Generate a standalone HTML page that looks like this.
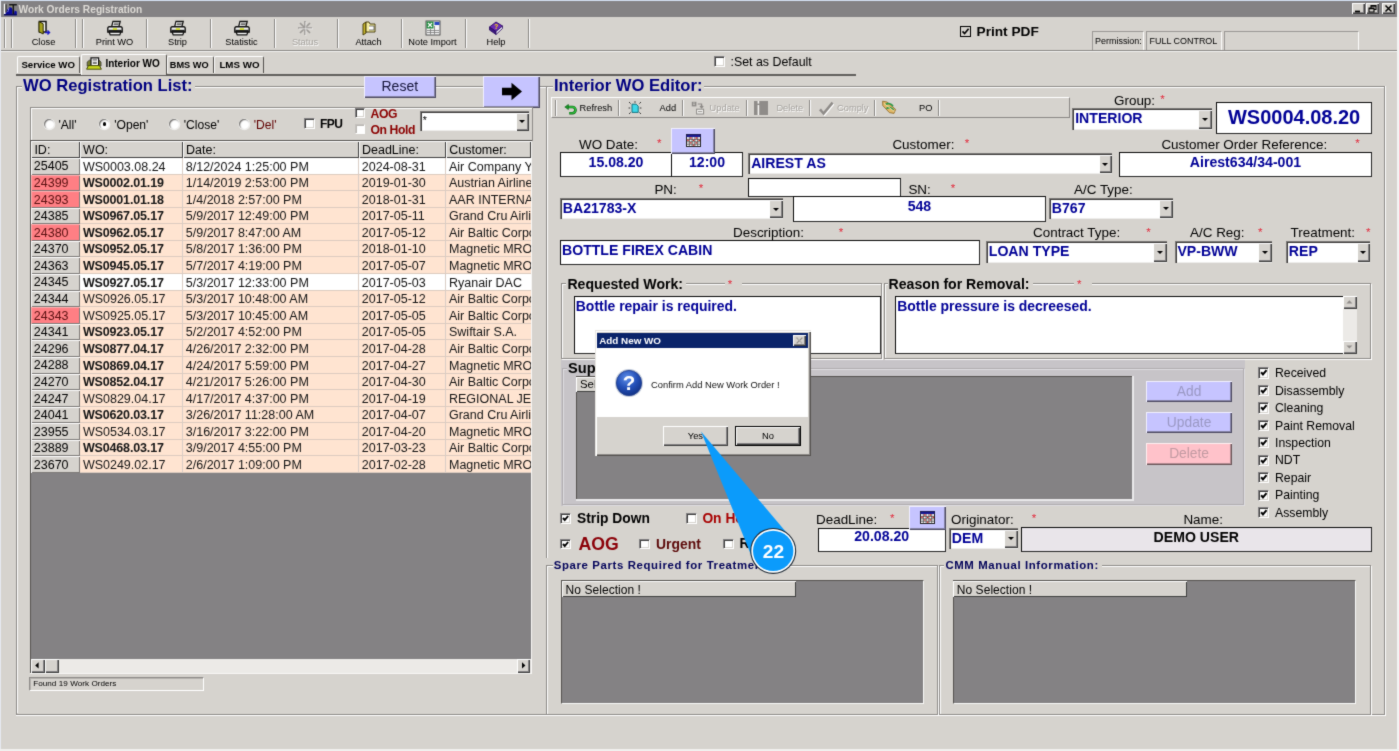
<!DOCTYPE html>
<html lang="en"><head><meta charset="utf-8"><title>Work Orders Registration</title>
<style>
html,body{margin:0;padding:0;}
body{width:1399px;height:751px;overflow:hidden;background:#d6d3ce;font-family:"Liberation Sans",sans-serif;color:#000;}
#app{position:relative;width:1399px;height:751px;overflow:hidden;background:#d6d3ce;will-change:transform;filter:url(#soft);}
#app div{position:absolute;box-sizing:border-box;}
.t{white-space:nowrap;}
.b{font-weight:bold;}
.tah{font-family:"Liberation Sans",sans-serif;}
.grp{border:1px solid #8e8b88;box-shadow:1px 1px 0 #fff, inset 1px 1px 0 #fff;}
.fld{background:#fff;border:1px solid #0a0a0a;border-right-color:#262626;border-bottom-color:#262626;white-space:nowrap;overflow:hidden;}
.cmb{background:#fff;border:1px solid #7b7977;border-right:0;border-bottom:0;box-shadow:inset 1px 1px 0 #3f3d3c, inset -1px -1px 0 #eeedeb;white-space:nowrap;overflow:hidden;}
.cmb .ct{position:absolute;left:1.8px;top:1px;}
.cmb .dd{position:absolute;right:0.4px;top:1px;bottom:0.8px;width:13.4px;background:#d6d3ce;box-shadow:inset 1px 1px 0 #fff, inset -1px -1px 0 #404040, inset -2px -2px 0 #848284;}
.cmb .dd i{position:absolute;left:3.1px;top:50%;margin-top:-1.6px;width:0;height:0;border-left:3.5px solid transparent;border-right:3.5px solid transparent;border-top:3.9px solid #000;}
.cb{background:#fff;border:1px solid #848284;border-right-color:#fff;border-bottom-color:#fff;box-shadow:inset 1px 1px 0 #404040, inset -1px -1px 0 #d6d3ce;}
.cb.fd{border-color:#c4c1bd #fff #fff #c4c1bd;box-shadow:inset 1px 1px 0 #b9b6b2;}
.cb svg{position:absolute;left:0;top:0;}
.rd{width:10px;height:10px;border-radius:50%;background:#fff;box-shadow:inset 1.1px 1.1px 1.2px #6e6c6a, 0.4px 0.4px 0 0.9px #efeeec;}
.rd i{position:absolute;left:3.2px;top:3.2px;width:3.6px;height:3.6px;border-radius:50%;background:#000;}
.btn{background:#d6d3ce;box-shadow:inset 1px 1px 0 #fff, inset -1px -1px 0 #404040, inset -2px -2px 0 #848284;text-align:center;white-space:nowrap;}
.lav{background:#c6c4ff;box-shadow:inset 1px 1px 0 #f0efff, inset -1px -1px 0 #4c4a62, inset -2px -2px 0 #8684a6;text-align:center;white-space:nowrap;}
.hd{background:#d6d3ce;box-shadow:inset 1px 1px 0 #fff, inset -1px -1px 0 #404040;white-space:nowrap;overflow:hidden;}
.sep{width:2px;border-left:1px solid #8a8785;border-right:1px solid #fff;}
.gc{white-space:nowrap;overflow:hidden;font-size:12.5px;line-height:16px;padding-left:2.2px;border-right:1px solid #d9cdc6;border-bottom:1px solid #dccbbf;color:#141414;}

</style></head>
<body>
<svg width="0" height="0" style="position:absolute" aria-hidden="true"><defs><filter id="soft" x="0" y="0" width="100%" height="100%" color-interpolation-filters="sRGB"><feConvolveMatrix order="3" kernelMatrix="0.5 2 0.5 2 14 2 0.5 2 0.5" divisor="24" edgeMode="duplicate" preserveAlpha="true"/></filter></defs></svg>
<div id="app">
<div style="left:0px;top:0px;width:1399px;height:1.2px;background:#d3dff0;"></div>
<div style="left:0px;top:0px;width:1px;height:751px;background:#e6e9f0;"></div>
<div style="left:1397px;top:0px;width:2px;height:751px;background:#f4f4f4;"></div>
<div style="left:0px;top:749px;width:1399px;height:2px;background:#f1f0ee;"></div>
<div style="left:1px;top:1px;width:1396px;height:16px;background:#848284;"></div>
<div style="left:3px;top:2px;width:15px;height:14px;"><svg width="15" height="14" viewBox="0 0 15 14"><path d="M1.6 2 V11.6 H5.4" stroke="#111" stroke-width="1.5" fill="none" transform="translate(1.1,0.2)"/><path d="M1.6 1.8 V11.4 H5.2" stroke="#fff" stroke-width="1.5" fill="none"/><rect x="7.8" y="3" width="1.7" height="8.6" fill="#9a9c78"/><path d="M3 11.2 L4.4 7.4 L6.4 5.2 L8.6 5.6 L9.6 8 V12 H11 L11.6 8.4 L13.8 9.6 V13.2 H1.2 L1.4 12.2 Z" fill="#0a0a9c"/><path d="M6.2 2.8 H13.8 M10.3 2.8 V12.4" stroke="#141414" stroke-width="1.5" fill="none"/><path d="M1 12.7 H13.8" stroke="#06065a" stroke-width="1.2"/><path d="M5 7.6 L6.2 6.6 M4.6 9.4 L5.6 8.8" stroke="#e8e8ff" stroke-width="0.9"/></svg></div>
<div class="t" style="left:18.5px;top:-0.3px;height:20px;line-height:20px;font-size:10.2px;font-weight:bold;color:#dedbd6;">Work Orders Registration</div>
<div class="btn" style="left:1352px;top:3px;width:13px;height:11px;"><svg width="13" height="11" viewBox="0 0 13 11" style="position:absolute;left:0;top:0"><path d="M3 8.5 H8" stroke="#000" stroke-width="1.8"/></svg></div>
<div class="btn" style="left:1366.4px;top:3px;width:13px;height:11px;"><svg width="13" height="11" viewBox="0 0 13 11" style="position:absolute;left:0;top:0"><path d="M5 2.5 H10 V6.5 H5 Z M5 3.2 H10" stroke="#000" stroke-width="1.1" fill="none"/><path d="M3 5 H8 V9 H3 Z M3 5.7 H8" stroke="#000" stroke-width="1.1" fill="#d6d3ce"/></svg></div>
<div class="btn" style="left:1382px;top:3px;width:13px;height:11px;"><svg width="13" height="11" viewBox="0 0 13 11" style="position:absolute;left:0;top:0"><path d="M3.5 2.5 L9.5 8.5 M9.5 2.5 L3.5 8.5" stroke="#000" stroke-width="1.5"/></svg></div>
<div style="left:1px;top:50px;width:1396px;height:1px;background:#8b8886;"></div>
<div style="left:1px;top:51px;width:1396px;height:1px;background:#f3f2f0;"></div>
<div class="sep" style="left:4px;top:19px;width:2px;height:29px;"></div>
<div class="sep" style="left:10.5px;top:19px;width:2px;height:29px;"></div>
<div class="sep" style="left:75px;top:19px;width:2px;height:29px;"></div>
<div class="sep" style="left:82px;top:19px;width:2px;height:29px;"></div>
<div class="sep" style="left:146px;top:19px;width:2px;height:29px;"></div>
<div class="sep" style="left:210px;top:19px;width:2px;height:29px;"></div>
<div class="sep" style="left:273.5px;top:19px;width:2px;height:29px;"></div>
<div class="sep" style="left:337px;top:19px;width:2px;height:29px;"></div>
<div class="sep" style="left:401px;top:19px;width:2px;height:29px;"></div>
<div class="sep" style="left:464.5px;top:19px;width:2px;height:29px;"></div>
<div class="sep" style="left:528px;top:19px;width:2px;height:29px;"></div>
<div style="left:35.5px;top:20.4px;width:16px;height:16px;"><svg width="16" height="16" viewBox="0 0 16 16"><path d="M3.4 1.6 H10 V12 H3.4 Z" fill="#fff" stroke="#111" stroke-width="1.5"/><path d="M3 1.6 L7.2 3.8 V14 L3 11.8 Z" fill="#a8a41c" stroke="#2a2800" stroke-width="1"/><path d="M9 12.5 H13 M11.5 10.5 L13.5 12.5 L11.5 14.5" stroke="#1a1ac8" stroke-width="1.4" fill="none"/></svg></div>
<div class="t" style="left:3.5px;width:80px;text-align:center;top:32.4px;height:20px;line-height:20px;font-size:9.25px;color:#000;">Close</div>
<div style="left:106.5px;top:20.4px;width:16px;height:16px;"><svg width="16" height="16" viewBox="0 0 16 16"><path d="M4.6 6.8 L6 1.4 H13.2 L11.8 6.8 Z" fill="#fff" stroke="#111" stroke-width="1.3"/><path d="M7 3.1 H11.9 M6.6 4.7 H11.5" stroke="#333" stroke-width="0.9"/><path d="M2.2 6.8 H13.8 A1.4 1.4 0 0 1 15.2 8.2 V12 H0.8 V8.2 A1.4 1.4 0 0 1 2.2 6.8 Z" fill="#f2f2f2" stroke="#111" stroke-width="1.4"/><rect x="1.4" y="9.8" width="13.2" height="2.4" fill="#1c1c1c"/><rect x="5.8" y="8.2" width="4.2" height="1.7" fill="#d4e020"/><path d="M2.2 12.2 L3.2 14.8 H12.8 L13.8 12.2 Z" fill="#fff" stroke="#111" stroke-width="1.2"/></svg></div>
<div class="t" style="left:74.5px;width:80px;text-align:center;top:32.4px;height:20px;line-height:20px;font-size:9.25px;color:#000;">Print WO</div>
<div style="left:169.5px;top:20.4px;width:16px;height:16px;"><svg width="16" height="16" viewBox="0 0 16 16"><path d="M4.6 6.8 L6 1.4 H13.2 L11.8 6.8 Z" fill="#fff" stroke="#111" stroke-width="1.3"/><path d="M7 3.1 H11.9 M6.6 4.7 H11.5" stroke="#333" stroke-width="0.9"/><path d="M2.2 6.8 H13.8 A1.4 1.4 0 0 1 15.2 8.2 V12 H0.8 V8.2 A1.4 1.4 0 0 1 2.2 6.8 Z" fill="#f2f2f2" stroke="#111" stroke-width="1.4"/><rect x="1.4" y="9.8" width="13.2" height="2.4" fill="#1c1c1c"/><rect x="5.8" y="8.2" width="4.2" height="1.7" fill="#d4e020"/><path d="M2.2 12.2 L3.2 14.8 H12.8 L13.8 12.2 Z" fill="#fff" stroke="#111" stroke-width="1.2"/></svg></div>
<div class="t" style="left:137.5px;width:80px;text-align:center;top:32.4px;height:20px;line-height:20px;font-size:9.25px;color:#000;">Strip</div>
<div style="left:233.5px;top:20.4px;width:16px;height:16px;"><svg width="16" height="16" viewBox="0 0 16 16"><path d="M4.6 6.8 L6 1.4 H13.2 L11.8 6.8 Z" fill="#fff" stroke="#111" stroke-width="1.3"/><path d="M7 3.1 H11.9 M6.6 4.7 H11.5" stroke="#333" stroke-width="0.9"/><path d="M2.2 6.8 H13.8 A1.4 1.4 0 0 1 15.2 8.2 V12 H0.8 V8.2 A1.4 1.4 0 0 1 2.2 6.8 Z" fill="#f2f2f2" stroke="#111" stroke-width="1.4"/><rect x="1.4" y="9.8" width="13.2" height="2.4" fill="#1c1c1c"/><rect x="5.8" y="8.2" width="4.2" height="1.7" fill="#d4e020"/><path d="M2.2 12.2 L3.2 14.8 H12.8 L13.8 12.2 Z" fill="#fff" stroke="#111" stroke-width="1.2"/></svg></div>
<div class="t" style="left:201.5px;width:80px;text-align:center;top:32.4px;height:20px;line-height:20px;font-size:9.25px;color:#000;">Statistic</div>
<div style="left:297px;top:20.4px;width:16px;height:16px;"><svg width="16" height="16" viewBox="0 0 16 16"><path d="M8 1 V15 M1 8 H15 M3 3 L13 13 M13 3 L3 13" stroke="#9c9996" stroke-width="1.7"/><path d="M8.8 1.8 V15.8 M1.8 8.8 H15.8" stroke="#fff" stroke-width="0.6"/></svg></div>
<div class="t" style="left:265px;width:80px;text-align:center;top:32.4px;height:20px;line-height:20px;font-size:9.25px;color:#a5a29e;text-shadow:0.7px 0.7px 0 #fff;">Status</div>
<div style="left:360.5px;top:20.4px;width:16px;height:16px;"><svg width="16" height="16" viewBox="0 0 16 16"><path d="M2 4 L5 2 V13 L2 15 Z" fill="#c8b830" stroke="#3a3000" stroke-width="0.9"/><path d="M5 2 H8 L9 4 H14 V12 H5 Z" fill="#f6eea0" stroke="#3a3000" stroke-width="0.9"/><path d="M8 6 H13 V10 H8" fill="#fff" stroke="#555" stroke-width="0.8"/></svg></div>
<div class="t" style="left:328.5px;width:80px;text-align:center;top:32.4px;height:20px;line-height:20px;font-size:9.25px;color:#000;">Attach</div>
<div style="left:424.5px;top:20.4px;width:16px;height:16px;"><svg width="16" height="16" viewBox="0 0 16 16"><rect x="1" y="1" width="14" height="14" fill="#f4f4f4" stroke="#444" stroke-width="0.9"/><rect x="1.5" y="1.5" width="7" height="7" fill="#1e8a3c"/><path d="M3 3 L7 7 M7 3 L3 7" stroke="#fff" stroke-width="1.2"/><rect x="9.5" y="2" width="5" height="3" fill="#2848c0"/><path d="M2 10.5 H14 M2 12.5 H14 M9.5 6 V14.5 M5.5 9 V14.5" stroke="#777" stroke-width="0.8"/></svg></div>
<div class="t" style="left:392.5px;width:80px;text-align:center;top:32.4px;height:20px;line-height:20px;font-size:9.25px;color:#000;">Note Import</div>
<div style="left:488px;top:20.4px;width:16px;height:16px;"><svg width="16" height="16" viewBox="0 0 16 16"><path d="M1.5 7 L8 2 L14.5 6 L8 11.5 Z" fill="#6a2ab8" stroke="#2a0a60" stroke-width="0.9"/><path d="M1.5 7 V10 L8 14.5 V11.5 Z" fill="#3a1880" stroke="#2a0a60" stroke-width="0.8"/><path d="M8 11.5 L14.5 6 V8.5 L8 14.5 Z" fill="#e8e8f4" stroke="#2a0a60" stroke-width="0.8"/><text x="6.2" y="9.2" font-family="Liberation Sans, sans-serif" font-size="6.5" font-weight="bold" fill="#ffe000">?</text></svg></div>
<div class="t" style="left:456px;width:80px;text-align:center;top:32.4px;height:20px;line-height:20px;font-size:9.25px;color:#000;">Help</div>
<div style="left:960px;top:26px;width:11px;height:11px;border:1.4px solid #000;"><svg width="9" height="9" viewBox="0 0 9 9" style="position:absolute;left:-0.2px;top:-0.3px"><path d="M1.5 4.4 L3.6 6.6 L7.6 1.8" stroke="#000" stroke-width="1.6" fill="none"/></svg></div>
<div class="t" style="left:976.5px;top:21.5px;height:20px;line-height:20px;font-size:13.7px;font-weight:bold;">Print PDF</div>
<div style="left:1091.5px;top:31px;width:52.5px;height:19px;border:1px solid #9a9794;border-right-color:#fbfbfa;border-bottom:none;"><span style="position:absolute;left:2.6px;top:0;line-height:18.4px;font-size:8.95px;white-space:nowrap">Permission:</span></div>
<div style="left:1146px;top:31px;width:75.5px;height:19px;border:1px solid #9a9794;border-right-color:#fbfbfa;border-bottom:none;"><span style="position:absolute;left:2.6px;top:0;line-height:18.4px;font-size:8.95px;white-space:nowrap">FULL CONTROL</span></div>
<div style="left:1223.5px;top:31px;width:135px;height:19px;border:1px solid #9a9794;border-right-color:#fbfbfa;border-bottom:none;"><span style="position:absolute;left:2.6px;top:0;line-height:18.4px;font-size:8.95px;white-space:nowrap"></span></div>
<div style="left:15.5px;top:74.4px;width:840px;height:1.4px;background:#605e5c;"></div>
<div style="left:17px;top:56px;width:63px;height:17.2px;border:1px solid #fff;border-right:1.5px solid #55524f;border-bottom:none;border-radius:2px 2px 0 0;background:#d6d3ce;"></div>
<div style="left:166.8px;top:56px;width:47.4px;height:17.2px;border:1px solid #fff;border-right:1.5px solid #55524f;border-bottom:none;border-radius:2px 2px 0 0;background:#d6d3ce;"></div>
<div style="left:214.4px;top:56px;width:49.6px;height:17.2px;border:1px solid #fff;border-right:1.5px solid #55524f;border-bottom:none;border-radius:2px 2px 0 0;background:#d6d3ce;"></div>
<div style="left:80.6px;top:53.8px;width:86.2px;height:20.8px;border:1px solid #fff;border-right:1.5px solid #55524f;border-bottom:none;border-radius:2px 2px 0 0;background:#d6d3ce;"></div>
<div class="t" style="left:21.4px;top:55.2px;height:20px;line-height:20px;font-size:9.65px;font-weight:bold;">Service WO</div>
<div class="t" style="left:105.4px;top:53.9px;height:20px;line-height:20px;font-size:10px;font-weight:bold;">Interior WO</div>
<div class="t" style="left:169.8px;top:55.2px;height:20px;line-height:20px;font-size:9.2px;font-weight:bold;">BMS WO</div>
<div class="t" style="left:219.4px;top:55.2px;height:20px;line-height:20px;font-size:9.75px;font-weight:bold;">LMS WO</div>
<div style="left:86px;top:56.4px;width:16px;height:13px;"><svg width="16" height="13" viewBox="0 0 16 13"><path d="M1.2 5 L3.4 3.2 H13 L15 5 V9 H1.2 Z" fill="#7a8030" stroke="#333" stroke-width="0.8"/><path d="M5 8.6 V0.8 H12.6 V8.6" fill="#fff" stroke="#111" stroke-width="1.2"/><path d="M6.6 2.4 H11 M6.6 3.8 H11" stroke="#8a8a8a" stroke-width="1"/><path d="M6.8 6 H10.8" stroke="#222" stroke-width="1.2"/><path d="M2.4 8.6 H13.4 L15.4 12.2 H0.6 Z" fill="#c6d61e" stroke="#3a3e00" stroke-width="0.9"/></svg></div>
<div class="cb" style="left:714px;top:56px;width:11px;height:11px;"></div>
<div class="t" style="left:730.5px;top:52px;height:20px;line-height:20px;font-size:12.4px;">:Set as Default</div>
<div style="left:15.6px;top:86px;width:1px;height:628.6px;background:#8e8b88;"></div>
<div style="left:16.6px;top:87px;width:1px;height:626.4px;background:#fff;"></div>
<div style="left:15.6px;top:86px;width:532px;height:1px;background:#8e8b88;"></div>
<div style="left:16.6px;top:87px;width:531px;height:1px;background:#fff;"></div>
<div style="left:15.6px;top:713.8px;width:1370px;height:1px;background:#8e8b88;"></div>
<div style="left:15.6px;top:714.8px;width:1370px;height:1px;background:#fff;"></div>
<div class="t" style="left:23px;top:80.8px;height:10px;line-height:10px;font-size:16.6px;font-weight:bold;color:#000080;background:#d6d3ce;padding:0 2px 0 1px;margin-left:-1px;">WO Registration List:</div>
<div class="lav" style="left:364px;top:76.2px;width:71.6px;height:21.4px;font-size:14px;line-height:21.6px;color:#15153a;">Reset</div>
<div class="lav" style="left:483px;top:76px;width:57.4px;height:31.6px;"><svg width="22" height="19" viewBox="0 0 22 18" preserveAspectRatio="none" style="position:absolute;left:18.2px;top:6px"><path d="M1 5.4 H10.5 V0.6 L21 9 L10.5 17.4 V12.6 H1 Z" fill="#000"/></svg></div>
<div style="left:29.6px;top:106.8px;width:503px;height:33.8px;border:1px solid #8e8b88;box-shadow:inset 1px 1px 0 #fff;border-right-color:#8e8b88;"></div>
<div class="rd" style="left:43.6px;top:119px;"></div>
<div class="t" style="left:58.4px;top:115px;height:20px;line-height:20px;font-size:12.1px;color:#000;">'All'</div>
<div class="rd" style="left:99.4px;top:119px;"><i></i></div>
<div class="t" style="left:114.2px;top:115px;height:20px;line-height:20px;font-size:12.1px;color:#000;">'Open'</div>
<div class="rd" style="left:169px;top:119px;"></div>
<div class="t" style="left:183.8px;top:115px;height:20px;line-height:20px;font-size:12.1px;color:#000;">'Close'</div>
<div class="rd" style="left:239px;top:119px;"></div>
<div class="t" style="left:253.8px;top:115px;height:20px;line-height:20px;font-size:12.1px;color:#600000;">'Del'</div>
<div class="cb" style="left:304px;top:118.2px;width:10.8px;height:10.8px;"></div>
<div class="t" style="left:320px;top:114px;height:20px;line-height:20px;font-size:12px;font-weight:bold;letter-spacing:-0.6px;">FPU</div>
<div class="cb" style="left:355px;top:107.8px;width:10.4px;height:10.4px;"></div>
<div class="t" style="left:370.4px;top:103.7px;height:20px;line-height:20px;font-size:12.2px;font-weight:bold;color:#8b0000;letter-spacing:-0.3px;">AOG</div>
<div class="cb fd" style="left:355px;top:124.1px;width:10.4px;height:10.4px;"></div>
<div class="t" style="left:370.4px;top:119.6px;height:20px;line-height:20px;font-size:12.2px;font-weight:bold;color:#8b0000;letter-spacing:-0.4px;">On Hold</div>
<div class="cmb" style="left:420px;top:111.4px;width:109.4px;height:20px;"><span class="ct" style="font-size:10.5px;font-weight:normal;color:#000;line-height:15.4px">*</span><span class="dd"><i></i></span></div>
<div style="left:31px;top:141px;width:499.6px;height:518px;background:#848284;"></div>
<div style="left:530.6px;top:140.4px;width:1.5px;height:534px;background:#f7f6f4;"></div>
<div style="left:30.2px;top:673px;width:502px;height:1.4px;background:#f7f6f4;"></div>
<div class="hd" style="left:31px;top:141.2px;width:48.7px;height:16.8px;"><span style="position:absolute;left:3.4px;top:0.4px;font-size:12.5px;line-height:16px">ID:</span></div>
<div class="hd" style="left:79.7px;top:141.2px;width:102.9px;height:16.8px;"><span style="position:absolute;left:3.4px;top:0.4px;font-size:12.5px;line-height:16px">WO:</span></div>
<div class="hd" style="left:182.6px;top:141.2px;width:176px;height:16.8px;"><span style="position:absolute;left:3.4px;top:0.4px;font-size:12.5px;line-height:16px">Date:</span></div>
<div class="hd" style="left:358.6px;top:141.2px;width:87.2px;height:16.8px;"><span style="position:absolute;left:3.4px;top:0.4px;font-size:12.5px;line-height:16px">DeadLine:</span></div>
<div class="hd" style="left:445.8px;top:141.2px;width:84.8px;height:16.8px;"><span style="position:absolute;left:3.4px;top:0.4px;font-size:12.5px;line-height:16px">Customer:</span></div>
<div style="left:31px;top:158px;width:48.7px;height:16.58px;background:#d6d3ce;box-shadow:inset 1px 1px 0 #fff, inset -1px -1px 0 #7d7a78;"><span style="position:absolute;left:2.8px;top:0.4px;font-size:12.5px;line-height:16px;color:#000;white-space:nowrap">25405</span></div>
<div class="gc" style="left:79.7px;top:158px;width:102.9px;height:16.58px;background:#fff;"><span style="position:relative;top:0.6px;left:1px">WS0003.08.24</span></div>
<div class="gc" style="left:182.6px;top:158px;width:176px;height:16.58px;background:#fff;"><span style="position:relative;top:0.6px;left:1px">8/12/2024 1:25:00 PM</span></div>
<div class="gc" style="left:358.6px;top:158px;width:87.2px;height:16.58px;background:#fff;"><span style="position:relative;top:0.6px;left:1px">2024-08-31</span></div>
<div class="gc" style="left:445.8px;top:158px;width:84.8px;height:16.58px;background:#fff;border-right:none;"><span style="position:relative;top:0.6px;left:1px">Air Company Y</span></div>
<div style="left:31px;top:174.58px;width:48.7px;height:16.58px;background:#ff7f84;box-shadow:inset 1px 1px 0 #ffb0b0, inset -1px -1px 0 #7d7a78;"><span style="position:absolute;left:2.8px;top:0.4px;font-size:12.5px;line-height:16px;color:#5a1010;white-space:nowrap">24399</span></div>
<div class="gc" style="left:79.7px;top:174.58px;width:102.9px;height:16.58px;background:#ffe4d1;font-weight:bold;letter-spacing:-0.15px;"><span style="position:relative;top:0.6px;left:1px">WS0002.01.19</span></div>
<div class="gc" style="left:182.6px;top:174.58px;width:176px;height:16.58px;background:#ffe4d1;"><span style="position:relative;top:0.6px;left:1px">1/14/2019 2:53:00 PM</span></div>
<div class="gc" style="left:358.6px;top:174.58px;width:87.2px;height:16.58px;background:#ffe4d1;"><span style="position:relative;top:0.6px;left:1px">2019-01-30</span></div>
<div class="gc" style="left:445.8px;top:174.58px;width:84.8px;height:16.58px;background:#ffe4d1;border-right:none;"><span style="position:relative;top:0.6px;left:1px">Austrian Airline</span></div>
<div style="left:31px;top:191.16px;width:48.7px;height:16.58px;background:#ff7f84;box-shadow:inset 1px 1px 0 #ffb0b0, inset -1px -1px 0 #7d7a78;"><span style="position:absolute;left:2.8px;top:0.4px;font-size:12.5px;line-height:16px;color:#5a1010;white-space:nowrap">24393</span></div>
<div class="gc" style="left:79.7px;top:191.16px;width:102.9px;height:16.58px;background:#ffe4d1;font-weight:bold;letter-spacing:-0.15px;"><span style="position:relative;top:0.6px;left:1px">WS0001.01.18</span></div>
<div class="gc" style="left:182.6px;top:191.16px;width:176px;height:16.58px;background:#ffe4d1;"><span style="position:relative;top:0.6px;left:1px">1/4/2018 2:57:00 PM</span></div>
<div class="gc" style="left:358.6px;top:191.16px;width:87.2px;height:16.58px;background:#ffe4d1;"><span style="position:relative;top:0.6px;left:1px">2018-01-31</span></div>
<div class="gc" style="left:445.8px;top:191.16px;width:84.8px;height:16.58px;background:#ffe4d1;border-right:none;"><span style="position:relative;top:0.6px;left:1px">AAR INTERNAT</span></div>
<div style="left:31px;top:207.74px;width:48.7px;height:16.58px;background:#d6d3ce;box-shadow:inset 1px 1px 0 #fff, inset -1px -1px 0 #7d7a78;"><span style="position:absolute;left:2.8px;top:0.4px;font-size:12.5px;line-height:16px;color:#000;white-space:nowrap">24385</span></div>
<div class="gc" style="left:79.7px;top:207.74px;width:102.9px;height:16.58px;background:#ffe4d1;font-weight:bold;letter-spacing:-0.15px;"><span style="position:relative;top:0.6px;left:1px">WS0967.05.17</span></div>
<div class="gc" style="left:182.6px;top:207.74px;width:176px;height:16.58px;background:#ffe4d1;"><span style="position:relative;top:0.6px;left:1px">5/9/2017 12:49:00 PM</span></div>
<div class="gc" style="left:358.6px;top:207.74px;width:87.2px;height:16.58px;background:#ffe4d1;"><span style="position:relative;top:0.6px;left:1px">2017-05-11</span></div>
<div class="gc" style="left:445.8px;top:207.74px;width:84.8px;height:16.58px;background:#ffe4d1;border-right:none;"><span style="position:relative;top:0.6px;left:1px">Grand Cru Airli</span></div>
<div style="left:31px;top:224.32px;width:48.7px;height:16.58px;background:#ff7f84;box-shadow:inset 1px 1px 0 #ffb0b0, inset -1px -1px 0 #7d7a78;"><span style="position:absolute;left:2.8px;top:0.4px;font-size:12.5px;line-height:16px;color:#5a1010;white-space:nowrap">24380</span></div>
<div class="gc" style="left:79.7px;top:224.32px;width:102.9px;height:16.58px;background:#ffe4d1;font-weight:bold;letter-spacing:-0.15px;"><span style="position:relative;top:0.6px;left:1px">WS0962.05.17</span></div>
<div class="gc" style="left:182.6px;top:224.32px;width:176px;height:16.58px;background:#ffe4d1;"><span style="position:relative;top:0.6px;left:1px">5/9/2017 8:47:00 AM</span></div>
<div class="gc" style="left:358.6px;top:224.32px;width:87.2px;height:16.58px;background:#ffe4d1;"><span style="position:relative;top:0.6px;left:1px">2017-05-12</span></div>
<div class="gc" style="left:445.8px;top:224.32px;width:84.8px;height:16.58px;background:#ffe4d1;border-right:none;"><span style="position:relative;top:0.6px;left:1px">Air Baltic Corpc</span></div>
<div style="left:31px;top:240.9px;width:48.7px;height:16.58px;background:#d6d3ce;box-shadow:inset 1px 1px 0 #fff, inset -1px -1px 0 #7d7a78;"><span style="position:absolute;left:2.8px;top:0.4px;font-size:12.5px;line-height:16px;color:#000;white-space:nowrap">24370</span></div>
<div class="gc" style="left:79.7px;top:240.9px;width:102.9px;height:16.58px;background:#ffe4d1;font-weight:bold;letter-spacing:-0.15px;"><span style="position:relative;top:0.6px;left:1px">WS0952.05.17</span></div>
<div class="gc" style="left:182.6px;top:240.9px;width:176px;height:16.58px;background:#ffe4d1;"><span style="position:relative;top:0.6px;left:1px">5/8/2017 1:36:00 PM</span></div>
<div class="gc" style="left:358.6px;top:240.9px;width:87.2px;height:16.58px;background:#ffe4d1;"><span style="position:relative;top:0.6px;left:1px">2018-01-10</span></div>
<div class="gc" style="left:445.8px;top:240.9px;width:84.8px;height:16.58px;background:#ffe4d1;border-right:none;"><span style="position:relative;top:0.6px;left:1px">Magnetic MRO</span></div>
<div style="left:31px;top:257.48px;width:48.7px;height:16.58px;background:#d6d3ce;box-shadow:inset 1px 1px 0 #fff, inset -1px -1px 0 #7d7a78;"><span style="position:absolute;left:2.8px;top:0.4px;font-size:12.5px;line-height:16px;color:#000;white-space:nowrap">24363</span></div>
<div class="gc" style="left:79.7px;top:257.48px;width:102.9px;height:16.58px;background:#ffe4d1;font-weight:bold;letter-spacing:-0.15px;"><span style="position:relative;top:0.6px;left:1px">WS0945.05.17</span></div>
<div class="gc" style="left:182.6px;top:257.48px;width:176px;height:16.58px;background:#ffe4d1;"><span style="position:relative;top:0.6px;left:1px">5/7/2017 4:19:00 PM</span></div>
<div class="gc" style="left:358.6px;top:257.48px;width:87.2px;height:16.58px;background:#ffe4d1;"><span style="position:relative;top:0.6px;left:1px">2017-05-07</span></div>
<div class="gc" style="left:445.8px;top:257.48px;width:84.8px;height:16.58px;background:#ffe4d1;border-right:none;"><span style="position:relative;top:0.6px;left:1px">Magnetic MRO</span></div>
<div style="left:31px;top:274.06px;width:48.7px;height:16.58px;background:#d6d3ce;box-shadow:inset 1px 1px 0 #fff, inset -1px -1px 0 #7d7a78;"><span style="position:absolute;left:2.8px;top:0.4px;font-size:12.5px;line-height:16px;color:#000;white-space:nowrap">24345</span></div>
<div class="gc" style="left:79.7px;top:274.06px;width:102.9px;height:16.58px;background:#fff;font-weight:bold;letter-spacing:-0.15px;"><span style="position:relative;top:0.6px;left:1px">WS0927.05.17</span></div>
<div class="gc" style="left:182.6px;top:274.06px;width:176px;height:16.58px;background:#fff;"><span style="position:relative;top:0.6px;left:1px">5/3/2017 12:33:00 PM</span></div>
<div class="gc" style="left:358.6px;top:274.06px;width:87.2px;height:16.58px;background:#fff;"><span style="position:relative;top:0.6px;left:1px">2017-05-03</span></div>
<div class="gc" style="left:445.8px;top:274.06px;width:84.8px;height:16.58px;background:#fff;border-right:none;"><span style="position:relative;top:0.6px;left:1px">Ryanair DAC</span></div>
<div style="left:31px;top:290.64px;width:48.7px;height:16.58px;background:#d6d3ce;box-shadow:inset 1px 1px 0 #fff, inset -1px -1px 0 #7d7a78;"><span style="position:absolute;left:2.8px;top:0.4px;font-size:12.5px;line-height:16px;color:#000;white-space:nowrap">24344</span></div>
<div class="gc" style="left:79.7px;top:290.64px;width:102.9px;height:16.58px;background:#ffe4d1;"><span style="position:relative;top:0.6px;left:1px">WS0926.05.17</span></div>
<div class="gc" style="left:182.6px;top:290.64px;width:176px;height:16.58px;background:#ffe4d1;"><span style="position:relative;top:0.6px;left:1px">5/3/2017 10:48:00 AM</span></div>
<div class="gc" style="left:358.6px;top:290.64px;width:87.2px;height:16.58px;background:#ffe4d1;"><span style="position:relative;top:0.6px;left:1px">2017-05-12</span></div>
<div class="gc" style="left:445.8px;top:290.64px;width:84.8px;height:16.58px;background:#ffe4d1;border-right:none;"><span style="position:relative;top:0.6px;left:1px">Air Baltic Corpc</span></div>
<div style="left:31px;top:307.22px;width:48.7px;height:16.58px;background:#ff7f84;box-shadow:inset 1px 1px 0 #ffb0b0, inset -1px -1px 0 #7d7a78;"><span style="position:absolute;left:2.8px;top:0.4px;font-size:12.5px;line-height:16px;color:#5a1010;white-space:nowrap">24343</span></div>
<div class="gc" style="left:79.7px;top:307.22px;width:102.9px;height:16.58px;background:#ffe4d1;"><span style="position:relative;top:0.6px;left:1px">WS0925.05.17</span></div>
<div class="gc" style="left:182.6px;top:307.22px;width:176px;height:16.58px;background:#ffe4d1;"><span style="position:relative;top:0.6px;left:1px">5/3/2017 10:45:00 AM</span></div>
<div class="gc" style="left:358.6px;top:307.22px;width:87.2px;height:16.58px;background:#ffe4d1;"><span style="position:relative;top:0.6px;left:1px">2017-05-05</span></div>
<div class="gc" style="left:445.8px;top:307.22px;width:84.8px;height:16.58px;background:#ffe4d1;border-right:none;"><span style="position:relative;top:0.6px;left:1px">Air Baltic Corpc</span></div>
<div style="left:31px;top:323.8px;width:48.7px;height:16.58px;background:#d6d3ce;box-shadow:inset 1px 1px 0 #fff, inset -1px -1px 0 #7d7a78;"><span style="position:absolute;left:2.8px;top:0.4px;font-size:12.5px;line-height:16px;color:#000;white-space:nowrap">24341</span></div>
<div class="gc" style="left:79.7px;top:323.8px;width:102.9px;height:16.58px;background:#ffe4d1;font-weight:bold;letter-spacing:-0.15px;"><span style="position:relative;top:0.6px;left:1px">WS0923.05.17</span></div>
<div class="gc" style="left:182.6px;top:323.8px;width:176px;height:16.58px;background:#ffe4d1;"><span style="position:relative;top:0.6px;left:1px">5/2/2017 4:52:00 PM</span></div>
<div class="gc" style="left:358.6px;top:323.8px;width:87.2px;height:16.58px;background:#ffe4d1;"><span style="position:relative;top:0.6px;left:1px">2017-05-05</span></div>
<div class="gc" style="left:445.8px;top:323.8px;width:84.8px;height:16.58px;background:#ffe4d1;border-right:none;"><span style="position:relative;top:0.6px;left:1px">Swiftair S.A.</span></div>
<div style="left:31px;top:340.38px;width:48.7px;height:16.58px;background:#d6d3ce;box-shadow:inset 1px 1px 0 #fff, inset -1px -1px 0 #7d7a78;"><span style="position:absolute;left:2.8px;top:0.4px;font-size:12.5px;line-height:16px;color:#000;white-space:nowrap">24296</span></div>
<div class="gc" style="left:79.7px;top:340.38px;width:102.9px;height:16.58px;background:#ffe4d1;font-weight:bold;letter-spacing:-0.15px;"><span style="position:relative;top:0.6px;left:1px">WS0877.04.17</span></div>
<div class="gc" style="left:182.6px;top:340.38px;width:176px;height:16.58px;background:#ffe4d1;"><span style="position:relative;top:0.6px;left:1px">4/26/2017 2:32:00 PM</span></div>
<div class="gc" style="left:358.6px;top:340.38px;width:87.2px;height:16.58px;background:#ffe4d1;"><span style="position:relative;top:0.6px;left:1px">2017-04-28</span></div>
<div class="gc" style="left:445.8px;top:340.38px;width:84.8px;height:16.58px;background:#ffe4d1;border-right:none;"><span style="position:relative;top:0.6px;left:1px">Air Baltic Corpc</span></div>
<div style="left:31px;top:356.96px;width:48.7px;height:16.58px;background:#d6d3ce;box-shadow:inset 1px 1px 0 #fff, inset -1px -1px 0 #7d7a78;"><span style="position:absolute;left:2.8px;top:0.4px;font-size:12.5px;line-height:16px;color:#000;white-space:nowrap">24288</span></div>
<div class="gc" style="left:79.7px;top:356.96px;width:102.9px;height:16.58px;background:#ffe4d1;font-weight:bold;letter-spacing:-0.15px;"><span style="position:relative;top:0.6px;left:1px">WS0869.04.17</span></div>
<div class="gc" style="left:182.6px;top:356.96px;width:176px;height:16.58px;background:#ffe4d1;"><span style="position:relative;top:0.6px;left:1px">4/24/2017 5:59:00 PM</span></div>
<div class="gc" style="left:358.6px;top:356.96px;width:87.2px;height:16.58px;background:#ffe4d1;"><span style="position:relative;top:0.6px;left:1px">2017-04-27</span></div>
<div class="gc" style="left:445.8px;top:356.96px;width:84.8px;height:16.58px;background:#ffe4d1;border-right:none;"><span style="position:relative;top:0.6px;left:1px">Magnetic MRO</span></div>
<div style="left:31px;top:373.54px;width:48.7px;height:16.58px;background:#d6d3ce;box-shadow:inset 1px 1px 0 #fff, inset -1px -1px 0 #7d7a78;"><span style="position:absolute;left:2.8px;top:0.4px;font-size:12.5px;line-height:16px;color:#000;white-space:nowrap">24270</span></div>
<div class="gc" style="left:79.7px;top:373.54px;width:102.9px;height:16.58px;background:#ffe4d1;font-weight:bold;letter-spacing:-0.15px;"><span style="position:relative;top:0.6px;left:1px">WS0852.04.17</span></div>
<div class="gc" style="left:182.6px;top:373.54px;width:176px;height:16.58px;background:#ffe4d1;"><span style="position:relative;top:0.6px;left:1px">4/21/2017 5:26:00 PM</span></div>
<div class="gc" style="left:358.6px;top:373.54px;width:87.2px;height:16.58px;background:#ffe4d1;"><span style="position:relative;top:0.6px;left:1px">2017-04-30</span></div>
<div class="gc" style="left:445.8px;top:373.54px;width:84.8px;height:16.58px;background:#ffe4d1;border-right:none;"><span style="position:relative;top:0.6px;left:1px">Air Baltic Corpc</span></div>
<div style="left:31px;top:390.12px;width:48.7px;height:16.58px;background:#d6d3ce;box-shadow:inset 1px 1px 0 #fff, inset -1px -1px 0 #7d7a78;"><span style="position:absolute;left:2.8px;top:0.4px;font-size:12.5px;line-height:16px;color:#000;white-space:nowrap">24247</span></div>
<div class="gc" style="left:79.7px;top:390.12px;width:102.9px;height:16.58px;background:#ffe4d1;"><span style="position:relative;top:0.6px;left:1px">WS0829.04.17</span></div>
<div class="gc" style="left:182.6px;top:390.12px;width:176px;height:16.58px;background:#ffe4d1;"><span style="position:relative;top:0.6px;left:1px">4/17/2017 4:37:00 PM</span></div>
<div class="gc" style="left:358.6px;top:390.12px;width:87.2px;height:16.58px;background:#ffe4d1;"><span style="position:relative;top:0.6px;left:1px">2017-04-19</span></div>
<div class="gc" style="left:445.8px;top:390.12px;width:84.8px;height:16.58px;background:#ffe4d1;border-right:none;"><span style="position:relative;top:0.6px;left:1px">REGIONAL JET</span></div>
<div style="left:31px;top:406.7px;width:48.7px;height:16.58px;background:#d6d3ce;box-shadow:inset 1px 1px 0 #fff, inset -1px -1px 0 #7d7a78;"><span style="position:absolute;left:2.8px;top:0.4px;font-size:12.5px;line-height:16px;color:#000;white-space:nowrap">24041</span></div>
<div class="gc" style="left:79.7px;top:406.7px;width:102.9px;height:16.58px;background:#ffe4d1;font-weight:bold;letter-spacing:-0.15px;"><span style="position:relative;top:0.6px;left:1px">WS0620.03.17</span></div>
<div class="gc" style="left:182.6px;top:406.7px;width:176px;height:16.58px;background:#ffe4d1;"><span style="position:relative;top:0.6px;left:1px">3/26/2017 11:28:00 AM</span></div>
<div class="gc" style="left:358.6px;top:406.7px;width:87.2px;height:16.58px;background:#ffe4d1;"><span style="position:relative;top:0.6px;left:1px">2017-04-07</span></div>
<div class="gc" style="left:445.8px;top:406.7px;width:84.8px;height:16.58px;background:#ffe4d1;border-right:none;"><span style="position:relative;top:0.6px;left:1px">Grand Cru Airli</span></div>
<div style="left:31px;top:423.28px;width:48.7px;height:16.58px;background:#d6d3ce;box-shadow:inset 1px 1px 0 #fff, inset -1px -1px 0 #7d7a78;"><span style="position:absolute;left:2.8px;top:0.4px;font-size:12.5px;line-height:16px;color:#000;white-space:nowrap">23955</span></div>
<div class="gc" style="left:79.7px;top:423.28px;width:102.9px;height:16.58px;background:#ffe4d1;"><span style="position:relative;top:0.6px;left:1px">WS0534.03.17</span></div>
<div class="gc" style="left:182.6px;top:423.28px;width:176px;height:16.58px;background:#ffe4d1;"><span style="position:relative;top:0.6px;left:1px">3/16/2017 3:22:00 PM</span></div>
<div class="gc" style="left:358.6px;top:423.28px;width:87.2px;height:16.58px;background:#ffe4d1;"><span style="position:relative;top:0.6px;left:1px">2017-04-20</span></div>
<div class="gc" style="left:445.8px;top:423.28px;width:84.8px;height:16.58px;background:#ffe4d1;border-right:none;"><span style="position:relative;top:0.6px;left:1px">Magnetic MRO</span></div>
<div style="left:31px;top:439.86px;width:48.7px;height:16.58px;background:#d6d3ce;box-shadow:inset 1px 1px 0 #fff, inset -1px -1px 0 #7d7a78;"><span style="position:absolute;left:2.8px;top:0.4px;font-size:12.5px;line-height:16px;color:#000;white-space:nowrap">23889</span></div>
<div class="gc" style="left:79.7px;top:439.86px;width:102.9px;height:16.58px;background:#ffe4d1;font-weight:bold;letter-spacing:-0.15px;"><span style="position:relative;top:0.6px;left:1px">WS0468.03.17</span></div>
<div class="gc" style="left:182.6px;top:439.86px;width:176px;height:16.58px;background:#ffe4d1;"><span style="position:relative;top:0.6px;left:1px">3/9/2017 4:55:00 PM</span></div>
<div class="gc" style="left:358.6px;top:439.86px;width:87.2px;height:16.58px;background:#ffe4d1;"><span style="position:relative;top:0.6px;left:1px">2017-03-23</span></div>
<div class="gc" style="left:445.8px;top:439.86px;width:84.8px;height:16.58px;background:#ffe4d1;border-right:none;"><span style="position:relative;top:0.6px;left:1px">Air Baltic Corpc</span></div>
<div style="left:31px;top:456.44px;width:48.7px;height:16.58px;background:#d6d3ce;box-shadow:inset 1px 1px 0 #fff, inset -1px -1px 0 #7d7a78;"><span style="position:absolute;left:2.8px;top:0.4px;font-size:12.5px;line-height:16px;color:#000;white-space:nowrap">23670</span></div>
<div class="gc" style="left:79.7px;top:456.44px;width:102.9px;height:16.58px;background:#ffe4d1;"><span style="position:relative;top:0.6px;left:1px">WS0249.02.17</span></div>
<div class="gc" style="left:182.6px;top:456.44px;width:176px;height:16.58px;background:#ffe4d1;"><span style="position:relative;top:0.6px;left:1px">2/6/2017 1:09:00 PM</span></div>
<div class="gc" style="left:358.6px;top:456.44px;width:87.2px;height:16.58px;background:#ffe4d1;"><span style="position:relative;top:0.6px;left:1px">2017-02-28</span></div>
<div class="gc" style="left:445.8px;top:456.44px;width:84.8px;height:16.58px;background:#ffe4d1;border-right:none;"><span style="position:relative;top:0.6px;left:1px">Magnetic MRO</span></div>
<div style="left:31px;top:659px;width:499.6px;height:14px;background:#eceae7;"></div>
<div class="btn" style="left:31.4px;top:659.4px;width:13.4px;height:13.4px;"><svg width="13" height="13" viewBox="0 0 13 13" style="position:absolute;left:0;top:0"><path d="M7.6 3.2 L4.2 6.4 L7.6 9.6 Z" fill="#000"/></svg></div>
<div class="btn" style="left:45px;top:659.4px;width:14px;height:13.4px;"></div>
<div class="btn" style="left:516.8px;top:659.4px;width:13.4px;height:13.4px;"><svg width="13" height="13" viewBox="0 0 13 13" style="position:absolute;left:0;top:0"><path d="M5 3.2 L8.4 6.4 L5 9.6 Z" fill="#000"/></svg></div>
<div style="left:30.2px;top:140.4px;width:1px;height:533px;background:#55524f;"></div>
<div style="left:30.2px;top:140.4px;width:502px;height:1px;background:#55524f;"></div>
<div style="left:29px;top:677px;width:175px;height:13.6px;border:1px solid #8e8b88;border-right-color:#fff;border-bottom-color:#fff;box-shadow:inset 1px 1px 0 #b5b2ae;"><span style="position:absolute;left:3.2px;top:0.2px;font-size:8.1px;line-height:11px;white-space:nowrap;word-spacing:0.3px">Found 19 Work Orders</span></div>
<div style="left:546.4px;top:86.4px;width:1px;height:471.4px;background:#8e8b88;"></div>
<div style="left:547.4px;top:87.4px;width:1px;height:470.4px;background:#fff;"></div>
<div style="left:546.6px;top:86.4px;width:838.4px;height:1px;background:#8e8b88;"></div>
<div style="left:547.6px;top:87.4px;width:836.4px;height:1px;background:#fff;"></div>
<div style="left:1384px;top:86.4px;width:1px;height:628.2px;background:#8e8b88;"></div>
<div style="left:1385px;top:86.4px;width:1px;height:629px;background:#fff;"></div>
<div class="t" style="left:554px;top:81.2px;height:10px;line-height:10px;font-size:16.6px;font-weight:bold;color:#000080;background:#d6d3ce;padding:0 2px 0 1px;margin-left:-1px;">Interior WO Editor:</div>
<div style="left:551px;top:97.4px;width:518.6px;height:20.4px;border:1px solid #fff;border-right-color:#8a8785;border-bottom-color:#8a8785;"></div>
<div class="sep" style="left:555px;top:100px;width:2px;height:15.6px;"></div>
<div class="sep" style="left:618.4px;top:100px;width:2px;height:15.6px;"></div>
<div class="sep" style="left:682.4px;top:100px;width:2px;height:15.6px;"></div>
<div class="sep" style="left:746px;top:100px;width:2px;height:15.6px;"></div>
<div class="sep" style="left:809px;top:100px;width:2px;height:15.6px;"></div>
<div class="sep" style="left:873.6px;top:100px;width:2px;height:15.6px;"></div>
<div class="sep" style="left:937.6px;top:100px;width:2px;height:15.6px;"></div>
<div style="left:564px;top:101.5px;width:13px;height:12px;"><svg width="13" height="12" viewBox="0 0 13 12"><path d="M3.2 3 H8.4 A3.1 3.1 0 0 1 8.4 9.2 H5.2" stroke="#0a5a12" stroke-width="2.6" fill="none"/><path d="M3.2 3 H8.4 A3.1 3.1 0 0 1 8.4 9.2 H5.2" stroke="#2fc23c" stroke-width="1.3" fill="none"/><path d="M4.4 0.4 L0.8 3 L4.4 5.6 Z" fill="#1a9a28" stroke="#0a5a12" stroke-width="0.6"/></svg></div>
<div class="t" style="left:579.6px;top:97.6px;height:20px;line-height:20px;font-size:9.3px;">Refresh</div>
<div style="left:628px;top:100.5px;width:14px;height:14px;"><svg width="14" height="14" viewBox="0 0 14 14"><path d="M4 3.2 H8.2 L10.2 5.2 V11.4 H4 Z" fill="#3fd8e8" stroke="#086a78" stroke-width="0.9"/><path d="M1 1 L2.6 2.6 M13 1 L11.4 2.6 M1 13 L2.6 11.4 M13 13 L11.4 11.4 M7 0.2 V1.8 M0.6 7 H2.2 M11.8 7 H13.4" stroke="#222" stroke-width="0.9"/></svg></div>
<div class="t" style="left:659.6px;top:97.6px;height:20px;line-height:20px;font-size:9.3px;">Add</div>
<div style="left:690.6px;top:100.8px;width:14px;height:14px;"><svg width="14" height="14" viewBox="0 0 14 14"><rect x="0.8" y="0.8" width="4.6" height="4.6" fill="#8d8a87"/><path d="M2 2 H4 M2 3.6 H4" stroke="#d6d3ce" stroke-width="0.7"/><path d="M6.8 3 H10.6 V6.4 M9 5 L10.6 6.8 L12.2 5" stroke="#8d8a87" stroke-width="1.2" fill="none"/><rect x="5.6" y="8.2" width="7" height="4.8" fill="#f4f3f1" stroke="#8d8a87" stroke-width="1"/><path d="M7 10.6 H11.2" stroke="#8d8a87" stroke-width="0.9"/></svg></div>
<div class="t" style="left:709.6px;top:97.6px;height:20px;line-height:20px;font-size:9.3px;color:#a5a29e;text-shadow:0.7px 0.7px 0 #fff;">Update</div>
<div style="left:754px;top:101px;width:14.4px;height:14px;"><svg width="14.4" height="14" viewBox="0 0 14.4 14"><rect x="0" y="0" width="14.4" height="14" fill="#8f8c89"/><rect x="3.6" y="0" width="1.6" height="2.6" fill="#f6f5f3"/><rect x="3.6" y="4" width="1.6" height="10" fill="#f6f5f3"/></svg></div>
<div class="t" style="left:776.4px;top:97.6px;height:20px;line-height:20px;font-size:9.3px;color:#a5a29e;text-shadow:0.7px 0.7px 0 #fff;">Delete</div>
<div style="left:819px;top:100.5px;width:15px;height:15px;"><svg width="15" height="15" viewBox="0 0 15 15"><path d="M1 8.4 L4.6 12.6 L13.6 1.6" stroke="#fff" stroke-width="2.6" fill="none" transform="translate(0.9,0.9)"/><path d="M1 8.4 L4.6 12.6 L13.6 1.6" stroke="#8f8c89" stroke-width="2.6" fill="none"/></svg></div>
<div class="t" style="left:837px;top:97.6px;height:20px;line-height:20px;font-size:9.3px;color:#a5a29e;text-shadow:0.7px 0.7px 0 #fff;">Comply</div>
<div style="left:881.6px;top:100.4px;width:15px;height:15px;"><svg width="15" height="15" viewBox="0 0 15 15"><path d="M0.6 1.2 L5 2 L13.6 9.4 L12 13.4 L7.4 12.6 L0.8 5.6 Z" fill="#e2b868" stroke="#8a6420" stroke-width="0.8"/><path d="M3.4 4.6 C6 2.6 9.6 3.8 11 6.4 M4.4 8.6 C7 6.6 10 7.8 11.6 10" stroke="#2f9a48" stroke-width="1.7" fill="none"/><path d="M2 3.4 L12.4 11.6" stroke="#f6deae" stroke-width="0.9"/></svg></div>
<div class="t" style="left:919px;top:97.6px;height:20px;line-height:20px;font-size:9.3px;">PO</div>
<div class="t" style="left:1114px;top:90.8px;height:20px;line-height:20px;font-size:13.45px;">Group:</div>
<div class="t" style="left:1160.3px;top:89.4px;height:20px;line-height:20px;font-size:11.6px;color:#e2283a;">*</div>
<div class="cmb" style="left:1072.4px;top:108px;width:139.8px;height:21.6px;"><span class="ct" style="font-size:14.1px;font-weight:bold;color:#000096;line-height:17px">INTERIOR</span><span class="dd"><i></i></span></div>
<div class="fld" style="left:1216px;top:102px;width:156.2px;height:31.8px;text-align:center;font-size:20px;font-weight:bold;color:#000096;line-height:29px;">WS0004.08.20</div>
<div class="t" style="left:579px;top:135px;height:20px;line-height:20px;font-size:13.45px;">WO Date:</div>
<div class="t" style="left:657.1px;top:133.4px;height:20px;line-height:20px;font-size:11.6px;color:#e2283a;">*</div>
<div class="fld" style="left:560px;top:152px;width:112px;height:24.8px;text-align:center;font-size:14.1px;font-weight:bold;color:#000096;line-height:18.6px;">15.08.20</div>
<div class="fld" style="left:671.4px;top:152px;width:71.2px;height:24.8px;text-align:center;font-size:14.1px;font-weight:bold;color:#000096;line-height:18.6px;">12:00</div>
<div class="lav" style="left:671px;top:128.4px;width:43.6px;height:25.6px;"></div>
<div style="left:685.6px;top:133px;width:15px;height:13px;"><svg width="15" height="13" viewBox="0 0 15 13"><rect x="0.5" y="0.5" width="14" height="12" fill="#fff" stroke="#222" stroke-width="1"/><rect x="0.5" y="0.5" width="14" height="2.6" fill="#1a1a90"/><path d="M0.5 5.4 H14.5 M0.5 7.8 H14.5 M0.5 10.2 H14.5 M3.3 3 V12.5 M6.1 3 V12.5 M8.9 3 V12.5 M11.7 3 V12.5" stroke="#333" stroke-width="0.7"/><path d="M4.1 4 H5.5 M9.7 4 H11.1 M1.3 6.4 H2.7 M6.9 6.4 H8.3 M12.5 6.4 H13.9 M4.1 8.8 H5.5 M9.7 8.8 H11.1 M6.9 11.2 H8.3" stroke="#d82020" stroke-width="1.3"/></svg></div>
<div class="t" style="left:892.4px;top:135px;height:20px;line-height:20px;font-size:13.45px;">Customer:</div>
<div class="t" style="left:964.7px;top:133.4px;height:20px;line-height:20px;font-size:11.6px;color:#e2283a;">*</div>
<div class="cmb" style="left:748.4px;top:153px;width:364px;height:21.2px;"><span class="ct" style="font-size:14.1px;font-weight:bold;color:#000096;line-height:16.6px">AIREST AS</span><span class="dd"><i></i></span></div>
<div class="t" style="left:1161.4px;top:135px;height:20px;line-height:20px;font-size:13.45px;">Customer Order Reference:</div>
<div class="t" style="left:1355.3px;top:133.4px;height:20px;line-height:20px;font-size:11.6px;color:#e2283a;">*</div>
<div class="fld" style="left:1118.8px;top:152px;width:253.4px;height:24.8px;text-align:center;font-size:14.1px;font-weight:bold;color:#000096;line-height:19px;">Airest634/34-001</div>
<div class="t" style="left:654.4px;top:180px;height:20px;line-height:20px;font-size:13.45px;">PN:</div>
<div class="t" style="left:698.7px;top:178px;height:20px;line-height:20px;font-size:11.6px;color:#e2283a;">*</div>
<div class="fld" style="left:748.4px;top:177.6px;width:153px;height:19.6px;text-align:center;font-size:14.1px;font-weight:bold;color:#000096;"></div>
<div class="t" style="left:908.4px;top:180px;height:20px;line-height:20px;font-size:13.45px;">SN:</div>
<div class="t" style="left:950.7px;top:178px;height:20px;line-height:20px;font-size:11.6px;color:#e2283a;">*</div>
<div class="t" style="left:1074px;top:180.2px;height:20px;line-height:20px;font-size:13.45px;">A/C Type:</div>
<div class="cmb" style="left:560px;top:198px;width:223.2px;height:21.2px;"><span class="ct" style="font-size:14.1px;font-weight:bold;color:#000096;line-height:16.6px">BA21783-X</span><span class="dd"><i></i></span></div>
<div class="fld" style="left:793px;top:196.4px;width:252.8px;height:25.4px;text-align:center;font-size:14.1px;font-weight:bold;color:#000096;line-height:19.6px;">548</div>
<div class="cmb" style="left:1049px;top:197.6px;width:124.2px;height:21px;"><span class="ct" style="font-size:14.1px;font-weight:bold;color:#000096;line-height:16.4px">B767</span><span class="dd"><i></i></span></div>
<div class="t" style="left:733px;top:222.6px;height:20px;line-height:20px;font-size:13.45px;">Description:</div>
<div class="t" style="left:838.7px;top:222px;height:20px;line-height:20px;font-size:11.6px;color:#e2283a;">*</div>
<div class="fld" style="left:560px;top:240.4px;width:420.2px;height:24.8px;text-align:left;font-size:14.1px;font-weight:bold;color:#000096;line-height:18.6px;padding-left:1px;">BOTTLE FIREX CABIN</div>
<div class="t" style="left:1033px;top:222.6px;height:20px;line-height:20px;font-size:13.45px;">Contract Type:</div>
<div class="t" style="left:1146.3px;top:222px;height:20px;line-height:20px;font-size:11.6px;color:#e2283a;">*</div>
<div class="cmb" style="left:986px;top:241px;width:181.2px;height:21.6px;"><span class="ct" style="font-size:14.1px;font-weight:bold;color:#000096;line-height:17px">LOAN TYPE</span><span class="dd"><i></i></span></div>
<div class="t" style="left:1190px;top:222.6px;height:20px;line-height:20px;font-size:13.45px;">A/C Reg:</div>
<div class="t" style="left:1258.1px;top:222px;height:20px;line-height:20px;font-size:11.6px;color:#e2283a;">*</div>
<div class="cmb" style="left:1174.6px;top:241px;width:97.6px;height:21.6px;"><span class="ct" style="font-size:14.1px;font-weight:bold;color:#000096;line-height:17px">VP-BWW</span><span class="dd"><i></i></span></div>
<div class="t" style="left:1290.6px;top:222.6px;height:20px;line-height:20px;font-size:13.45px;">Treatment:</div>
<div class="t" style="left:1366.1px;top:222px;height:20px;line-height:20px;font-size:11.6px;color:#e2283a;">*</div>
<div class="cmb" style="left:1286px;top:241px;width:84.4px;height:21.6px;"><span class="ct" style="font-size:14.1px;font-weight:bold;color:#000096;line-height:17px">REP</span><span class="dd"><i></i></span></div>
<div class="grp" style="left:560.6px;top:283.1px;width:321.6px;height:76.1px;"></div>
<div class="t" style="left:567.4px;top:275.8px;height:16px;line-height:16px;font-size:14.1px;font-weight:bold;background:#d6d3ce;padding:0 3px 0 1px;margin-left:-1px;">Requested Work:</div>
<div style="left:725px;top:280px;width:17px;height:8px;background:#d6d3ce;"></div>
<div class="t" style="left:727.7px;top:273.6px;height:20px;line-height:20px;font-size:11.6px;color:#e2283a;">*</div>
<div class="fld" style="left:574px;top:296.4px;width:307.4px;height:57.8px;text-align:left;font-size:13.95px;font-weight:bold;color:#000096;line-height:18px;padding-left:0.8px;">Bottle repair is required.</div>
<div class="grp" style="left:883.6px;top:283.1px;width:487.2px;height:76.1px;"></div>
<div class="t" style="left:888.6px;top:275.8px;height:16px;line-height:16px;font-size:14.1px;font-weight:bold;background:#d6d3ce;padding:0 3px 0 1px;margin-left:-1px;">Reason for Removal:</div>
<div style="left:1074px;top:280px;width:18px;height:8px;background:#d6d3ce;"></div>
<div class="t" style="left:1077.1px;top:273.6px;height:20px;line-height:20px;font-size:11.6px;color:#e2283a;">*</div>
<div class="fld" style="left:895px;top:296.4px;width:448.6px;height:57.8px;text-align:left;font-size:13.95px;font-weight:bold;color:#000096;line-height:18px;padding-left:1.2px;">Bottle pressure is decreesed.</div>
<div style="left:1343.4px;top:296.4px;width:14px;height:57.8px;background:#eceae7;"></div>
<div class="btn" style="left:1343.4px;top:296.4px;width:14px;height:12.8px;"><svg width="13" height="12" viewBox="0 0 13 12" style="position:absolute;left:0;top:0"><path d="M3.4 7.4 L6.4 4.2 L9.4 7.4 Z" fill="#8f8c89"/></svg></div>
<div class="btn" style="left:1343.4px;top:341.4px;width:14px;height:12.8px;"><svg width="13" height="12" viewBox="0 0 13 12" style="position:absolute;left:0;top:0"><path d="M3.4 4.4 L6.4 7.6 L9.4 4.4 Z" fill="#8f8c89"/></svg></div>
<div style="left:560.6px;top:360.2px;width:684.6px;height:146px;background:#c7c4c8;"></div>
<div style="left:561.6px;top:367.6px;width:682px;height:137px;border:1px solid #b0adb0;box-shadow:inset 1px 1px 0 #dedce0, 1px 1px 0 #dedce0;"></div>
<div class="t" style="left:568px;top:360.4px;height:16px;line-height:16px;font-size:14.6px;font-weight:bold;background:#c7c4c8;padding:0 3px 0 1px;margin-left:-1px;">Suppliers:</div>
<div style="left:575.6px;top:376px;width:556.6px;height:122.8px;background:#848284;border-left:1px solid #55524f;border-top:1px solid #55524f;"></div>
<div style="left:575.6px;top:498.6px;width:558px;height:2.6px;background:#e9e8ea;"></div>
<div style="left:1132px;top:376px;width:1.6px;height:124px;background:#e9e8ea;"></div>
<div class="hd" style="left:576.4px;top:377px;width:62px;height:15.4px;"><span style="position:absolute;left:3.6px;top:0;font-size:11.4px;line-height:15.6px">Sel</span></div>
<div class="lav" style="left:1146.4px;top:381px;width:85.4px;height:21.2px;font-size:13.8px;line-height:22.6px;color:#9a98c4;">Add</div>
<div class="lav" style="left:1146.4px;top:412px;width:85.4px;height:21.4px;font-size:13.8px;line-height:22.6px;color:#9a98c4;">Update</div>
<div style="left:1146.4px;top:443.4px;width:85.4px;height:21.2px;background:#ffc2ca;box-shadow:inset 1px 1px 0 #ffeef0, inset -1px -1px 0 #6a5558, inset -2px -2px 0 #b48c92;text-align:center;font-size:13.8px;line-height:22.6px;color:#c29aa2;">Delete</div>
<div class="cb on" style="left:1258px;top:367.35px;width:11.3px;height:11.3px;"><svg viewBox="0 0 11 11" width="100%" height="100%"><path d="M2.5 5 L4.7 7.5 L8.9 2.5" stroke="#000" stroke-width="2.4" fill="none"/></svg></div>
<div class="t" style="left:1275px;top:363.2px;height:20px;line-height:20px;font-size:12.25px;">Received</div>
<div class="cb on" style="left:1258px;top:384.8px;width:11.3px;height:11.3px;"><svg viewBox="0 0 11 11" width="100%" height="100%"><path d="M2.5 5 L4.7 7.5 L8.9 2.5" stroke="#000" stroke-width="2.4" fill="none"/></svg></div>
<div class="t" style="left:1275px;top:380.65px;height:20px;line-height:20px;font-size:12.25px;">Disassembly</div>
<div class="cb on" style="left:1258px;top:402.25px;width:11.3px;height:11.3px;"><svg viewBox="0 0 11 11" width="100%" height="100%"><path d="M2.5 5 L4.7 7.5 L8.9 2.5" stroke="#000" stroke-width="2.4" fill="none"/></svg></div>
<div class="t" style="left:1275px;top:398.1px;height:20px;line-height:20px;font-size:12.25px;">Cleaning</div>
<div class="cb on" style="left:1258px;top:419.7px;width:11.3px;height:11.3px;"><svg viewBox="0 0 11 11" width="100%" height="100%"><path d="M2.5 5 L4.7 7.5 L8.9 2.5" stroke="#000" stroke-width="2.4" fill="none"/></svg></div>
<div class="t" style="left:1275px;top:415.55px;height:20px;line-height:20px;font-size:12.25px;">Paint Removal</div>
<div class="cb on" style="left:1258px;top:437.15px;width:11.3px;height:11.3px;"><svg viewBox="0 0 11 11" width="100%" height="100%"><path d="M2.5 5 L4.7 7.5 L8.9 2.5" stroke="#000" stroke-width="2.4" fill="none"/></svg></div>
<div class="t" style="left:1275px;top:433px;height:20px;line-height:20px;font-size:12.25px;">Inspection</div>
<div class="cb on" style="left:1258px;top:454.6px;width:11.3px;height:11.3px;"><svg viewBox="0 0 11 11" width="100%" height="100%"><path d="M2.5 5 L4.7 7.5 L8.9 2.5" stroke="#000" stroke-width="2.4" fill="none"/></svg></div>
<div class="t" style="left:1275px;top:450.45px;height:20px;line-height:20px;font-size:12.25px;">NDT</div>
<div class="cb on" style="left:1258px;top:472.05px;width:11.3px;height:11.3px;"><svg viewBox="0 0 11 11" width="100%" height="100%"><path d="M2.5 5 L4.7 7.5 L8.9 2.5" stroke="#000" stroke-width="2.4" fill="none"/></svg></div>
<div class="t" style="left:1275px;top:467.9px;height:20px;line-height:20px;font-size:12.25px;">Repair</div>
<div class="cb on" style="left:1258px;top:489.5px;width:11.3px;height:11.3px;"><svg viewBox="0 0 11 11" width="100%" height="100%"><path d="M2.5 5 L4.7 7.5 L8.9 2.5" stroke="#000" stroke-width="2.4" fill="none"/></svg></div>
<div class="t" style="left:1275px;top:485.35px;height:20px;line-height:20px;font-size:12.25px;">Painting</div>
<div class="cb on" style="left:1258px;top:506.95px;width:11.3px;height:11.3px;"><svg viewBox="0 0 11 11" width="100%" height="100%"><path d="M2.5 5 L4.7 7.5 L8.9 2.5" stroke="#000" stroke-width="2.4" fill="none"/></svg></div>
<div class="t" style="left:1275px;top:502.8px;height:20px;line-height:20px;font-size:12.25px;">Assembly</div>
<div class="cb on" style="left:560px;top:513.2px;width:10.8px;height:10.8px;"><svg viewBox="0 0 11 11" width="100%" height="100%"><path d="M2.5 5 L4.7 7.5 L8.9 2.5" stroke="#000" stroke-width="2.4" fill="none"/></svg></div>
<div class="t" style="left:577px;top:509.2px;height:20px;line-height:20px;font-size:13.8px;font-weight:bold;">Strip Down</div>
<div class="cb" style="left:686px;top:513.2px;width:10.8px;height:10.8px;"></div>
<div class="t" style="left:702.4px;top:509px;height:20px;line-height:20px;font-size:13.8px;font-weight:bold;color:#a80000;">On Hold</div>
<div class="cb on" style="left:560px;top:538.6px;width:10.8px;height:10.8px;"><svg viewBox="0 0 11 11" width="100%" height="100%"><path d="M2.5 5 L4.7 7.5 L8.9 2.5" stroke="#000" stroke-width="2.4" fill="none"/></svg></div>
<div class="t" style="left:578.4px;top:533.6px;height:20px;line-height:20px;font-size:17.7px;font-weight:bold;color:#8b0008;">AOG</div>
<div class="cb" style="left:639.4px;top:538.6px;width:10.8px;height:10.8px;"></div>
<div class="t" style="left:656px;top:533.8px;height:20px;line-height:20px;font-size:13.9px;font-weight:bold;color:#5c0a0a;">Urgent</div>
<div class="cb" style="left:723px;top:538.6px;width:10.8px;height:10.8px;"></div>
<div class="t" style="left:739.6px;top:533.8px;height:20px;line-height:20px;font-size:13.8px;font-weight:bold;">Routine</div>
<div class="t" style="left:816px;top:509.6px;height:20px;line-height:20px;font-size:13.45px;">DeadLine:</div>
<div class="t" style="left:890.1px;top:508.4px;height:20px;line-height:20px;font-size:11.6px;color:#e2283a;">*</div>
<div class="fld" style="left:817.6px;top:528px;width:128.2px;height:23.8px;text-align:center;font-size:14.1px;font-weight:bold;color:#000096;line-height:15.4px;">20.08.20</div>
<div class="lav" style="left:909.4px;top:506px;width:36.8px;height:23.8px;"></div>
<div style="left:920.4px;top:509.8px;width:15px;height:13px;"><svg width="15" height="13" viewBox="0 0 15 13"><rect x="0.5" y="0.5" width="14" height="12" fill="#fff" stroke="#222" stroke-width="1"/><rect x="0.5" y="0.5" width="14" height="2.6" fill="#1a1a90"/><path d="M0.5 5.4 H14.5 M0.5 7.8 H14.5 M0.5 10.2 H14.5 M3.3 3 V12.5 M6.1 3 V12.5 M8.9 3 V12.5 M11.7 3 V12.5" stroke="#333" stroke-width="0.7"/><path d="M4.1 4 H5.5 M9.7 4 H11.1 M1.3 6.4 H2.7 M6.9 6.4 H8.3 M12.5 6.4 H13.9 M4.1 8.8 H5.5 M9.7 8.8 H11.1 M6.9 11.2 H8.3" stroke="#d82020" stroke-width="1.3"/></svg></div>
<div class="t" style="left:951px;top:509.6px;height:20px;line-height:20px;font-size:13.45px;">Originator:</div>
<div class="t" style="left:1031.7px;top:508.4px;height:20px;line-height:20px;font-size:11.6px;color:#e2283a;">*</div>
<div class="cmb" style="left:949px;top:527.6px;width:69.2px;height:21.2px;"><span class="ct" style="font-size:14.1px;font-weight:bold;color:#000096;line-height:16.6px">DEM</span><span class="dd"><i></i></span></div>
<div class="t" style="left:1183.4px;top:509.6px;height:20px;line-height:20px;font-size:13.45px;">Name:</div>
<div class="fld" style="left:1021px;top:527px;width:350.6px;height:24.8px;text-align:center;font-size:14.1px;font-weight:bold;color:#000;background:#e9e5ea;line-height:18.6px;">DEMO USER</div>
<div class="grp" style="left:546.4px;top:565.1px;width:392px;height:149.7px;"></div>
<div class="t" style="left:553.8px;top:558px;height:14px;line-height:14px;font-size:11.4px;font-weight:bold;color:#04045a;letter-spacing:0.62px;background:#d6d3ce;padding:0 3px 0 1px;margin-left:-1px;">Spare Parts Required for Treatment:</div>
<div style="left:561px;top:580px;width:363px;height:123.6px;background:#848284;border-left:1px solid #55524f;border-top:1px solid #55524f;border-right:1.4px solid #f8f8f7;border-bottom:1.4px solid #f8f8f7;"></div>
<div class="hd" style="left:561.6px;top:581px;width:234.2px;height:16px;"><span style="position:absolute;left:4px;top:1.6px;font-size:12px;line-height:15.6px;letter-spacing:0.05px">No Selection !</span></div>
<div class="grp" style="left:939.4px;top:565.1px;width:431.4px;height:149.7px;"></div>
<div class="t" style="left:945.4px;top:558px;height:14px;line-height:14px;font-size:11.4px;font-weight:bold;color:#04045a;letter-spacing:0.62px;background:#d6d3ce;padding:0 3px 0 1px;margin-left:-1px;">CMM Manual Information:</div>
<div style="left:952.6px;top:580px;width:403.2px;height:123.8px;background:#848284;border-left:1px solid #55524f;border-top:1px solid #55524f;border-right:1.4px solid #f8f8f7;border-bottom:1.4px solid #f8f8f7;"></div>
<div class="hd" style="left:953.2px;top:581px;width:233.6px;height:16px;"><span style="position:absolute;left:3.6px;top:1.6px;font-size:12px;line-height:15.6px;letter-spacing:0.05px">No Selection !</span></div>
<div style="left:595px;top:330.4px;width:215.6px;height:125.8px;background:#d6d3ce;box-shadow:inset 1px 1px 0 #e8e6e2, inset 2px 2px 0 #fff, inset -1px -1px 0 #55524f, inset -2px -2px 0 #8e8b88;"></div>
<div style="left:597.2px;top:333px;width:211.2px;height:15.2px;background:#0a246a;"></div>
<div class="t" style="left:599.2px;top:330.6px;height:20px;line-height:20px;font-size:9.85px;font-weight:bold;color:#fff;">Add New WO</div>
<div class="btn" style="left:793px;top:335px;width:13.4px;height:11.4px;"><svg width="13" height="11" viewBox="0 0 13 11" style="position:absolute;left:0;top:0"><path d="M3.6 2.6 L9.4 8.4 M9.4 2.6 L3.6 8.4" stroke="#8f8c89" stroke-width="1.3"/><path d="M4.4 3 L10 8.6" stroke="#fff" stroke-width="0.5"/></svg></div>
<div style="left:597.2px;top:348.2px;width:211.2px;height:69.2px;background:#fff;"></div>
<div style="left:614.4px;top:368px;width:30px;height:30px;"><svg width="30" height="30" viewBox="0 0 30 30"><defs><radialGradient id="qg" cx="0.42" cy="0.3" r="0.8"><stop offset="0" stop-color="#5f8fe8"/><stop offset="0.5" stop-color="#2450b8"/><stop offset="1" stop-color="#0e2a78"/></radialGradient></defs><circle cx="15" cy="15" r="14" fill="#c9d0dc"/><circle cx="15" cy="15" r="12.6" fill="url(#qg)" stroke="#1c3a8c" stroke-width="0.8"/><text x="15" y="22.2" text-anchor="middle" font-family="Liberation Sans, sans-serif" font-size="20.5" font-weight="bold" fill="#fff">?</text></svg></div>
<div class="t" style="left:651px;top:374.6px;height:20px;line-height:20px;font-size:9.36px;color:#111;">Confirm Add New Work Order !</div>
<div class="btn" style="left:663px;top:426px;width:64.8px;height:19.8px;font-size:9.4px;line-height:19.6px;">Yes</div>
<div style="left:735px;top:426px;width:65.8px;height:19.8px;background:#d6d3ce;border:1px solid #000;box-shadow:inset 1px 1px 0 #fff, inset -1px -1px 0 #404040, inset -2px -2px 0 #848284;text-align:center;font-size:9.4px;line-height:17.6px;">No</div>
<div style="left:0;top:0;width:1399px;height:751px;pointer-events:none;"><svg width="1399" height="751" viewBox="0 0 1399 751"><path d="M701.0 431.4 L790.0 536.7 L773.2 550.9 L752.8 559.2 Z" fill="#0b9bfb"/><circle cx="773.2" cy="550.9" r="23" fill="#1b2733"/><circle cx="773.2" cy="550.9" r="21.9" fill="#fff"/><circle cx="773.2" cy="550.9" r="20.2" fill="#0b9bfb"/><text x="773.5" y="557.9" text-anchor="middle" font-family="Liberation Sans, sans-serif" font-size="19.2" font-weight="bold" fill="#fff">22</text></svg></div>
</div>
</body></html>
